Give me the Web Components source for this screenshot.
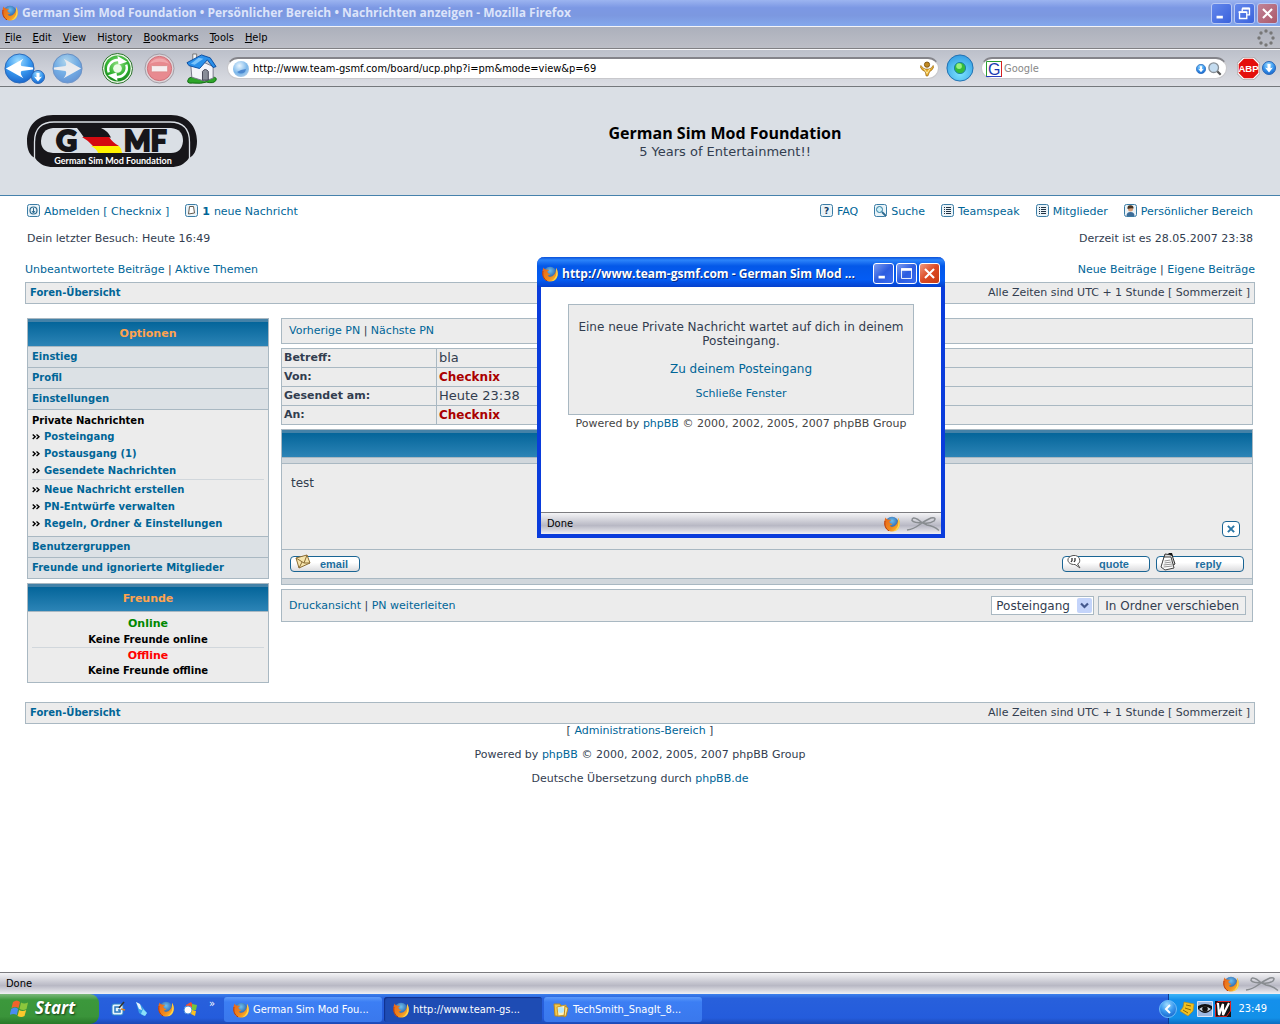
<!DOCTYPE html>
<html lang="de">
<head>
<meta charset="utf-8">
<title>German Sim Mod Foundation • Persönlicher Bereich • Nachrichten anzeigen</title>
<style>
  html, body {
    height: 100%;
    margin: 0;
  }
  body {
    --ui: "DejaVu Sans Condensed", "Liberation Sans", sans-serif;
    --caption: "Open Sans", "Noto Sans", sans-serif;
    --link: #006597;
    --line: #a9b8c2;
    --row: #ececec;
    display: flex;
    flex-direction: column;
    background: #fff;
    color: #323d4f;
    font: 11px/14px "DejaVu Sans", sans-serif;
  }
  .columns {
    display: flex;
    gap: 12px;
    align-items: flex-start;
    padding: 14px 27px 19px;
  }
</style>
</head>
<body>
<browser-window>
  <board-header></board-header>
  <board-nav></board-nav>
  <div class="columns">
    <pm-sidebar></pm-sidebar>
    <pm-view></pm-view>
  </div>
  <crumb-bar style="margin: 0 25px"></crumb-bar>
  <board-footer></board-footer>
</browser-window>
<task-bar></task-bar>
<popup-window></popup-window>

<script>
const shared = `
  :host, *, ::before, ::after { box-sizing: border-box; }
  a { color: var(--link); text-decoration: none; }
  button { font: inherit; color: inherit; border: 0; padding: 0; background: none; }
  ul, p, h1, h2 { margin: 0; padding: 0; list-style: none; }
`;

function define(name, css, html) {
  customElements.define(name, class extends HTMLElement {
    constructor() {
      super();
      this.shadowDOM = this.attachShadow({ mode: 'open' });
    }
    connectedCallback() {
      this.shadowDOM.innerHTML = `<style>${shared}${css}</style>${html}`;
    }
  });
}

const blueBall = `<radialGradient id="b" cx=".45" cy=".25" r=".8"><stop offset="0" stop-color="#9fdcff"/><stop offset=".5" stop-color="#3a9af0"/><stop offset="1" stop-color="#1560c8"/></radialGradient>`;
const smallButton = `<rect x=".5" y=".5" width="12" height="12" rx="2" fill="#eaf3f8" stroke="#3a7ca5"/>`;

// [viewBox, markup]
const icons = {
  firefox: ['0 0 16 16', `
    <radialGradient id="b" cx=".5" cy=".3" r=".7"><stop offset="0" stop-color="#6cc0f0"/><stop offset="1" stop-color="#123a8c"/></radialGradient>
    <linearGradient id="o" x1="0" y1="0" x2="1" y2="1"><stop offset="0" stop-color="#e8641a"/><stop offset=".6" stop-color="#f08a1c"/><stop offset="1" stop-color="#ffd23c"/></linearGradient>
    <circle cx="8" cy="7.5" r="6.8" fill="url(#b)"/>
    <path d="M1.600 1.500C-.2 5-.2 11 3 13.800 6.500 16.600 12 16 14.500 12.300 16.500 9 15.800 4 14 2c.2 3-.6 5-2 6.800-1.700 2.300-5 2.600-6.400.6 1.400.1 2.400-.4 2.600-1.300C6.200 8 5 6.700 5.600 5L7.500 4C5 3.500 2.500 4 1.600 1.500Z" fill="url(#o)"/>
    <path d="M14 2c2 2.500 2.300 7 .5 10-1 1.700-3 3-5 3.300 3-2 5-5 4.800-8.600Z" fill="#ffd84a"/>
    <path d="M1 5c-.8 4 .5 8 4 9.800" stroke="#b8380c" fill="none"/>`],
  back: ['0 0 32 32', `${blueBall}<circle cx="16" cy="16" r="15" fill="url(#b)" stroke="#2a68b8"/><path d="M2 16 20 6q-4 5-2 7.500L30 15v2l-12 1.500q-2 2.500 2 7.500Z" fill="#fff"/>`],
  forward: ['0 0 32 32', `${blueBall}<g opacity=".6"><circle cx="16" cy="16" r="15" fill="url(#b)" stroke="#2a68b8"/><path d="M30 16 12 6q4 5 2 7.500L2 15v2l12 1.500q2 2.500-2 7.500Z" fill="#fff"/></g>`],
  drop: ['0 0 14 14', `${blueBall}<circle cx="7" cy="7" r="6.500" fill="url(#b)" stroke="#2a68b8"/><path d="M7 11.500 3 6.500l2.500.8V3h3v4.300l2.500-.8Z" fill="#fff"/>`],
  reload: ['0 0 32 32', `
    <radialGradient id="g" cx=".5" cy=".35" r=".7"><stop offset="0" stop-color="#8fe080"/><stop offset=".6" stop-color="#30b030"/><stop offset="1" stop-color="#128018"/></radialGradient>
    <circle cx="16" cy="16" r="15.500" fill="#e8f4e4" stroke="#287028"/><circle cx="16" cy="16" r="13.500" fill="url(#g)"/>
    <path d="M7 20a9.500 9.500 0 0 1 11-12.500" stroke="#fff" stroke-width="2.500" fill="none"/><path d="M16 3 26 9l-9 3Z" fill="#fff"/>
    <path d="M25 12a9.500 9.500 0 0 1-11 12.500" stroke="#fff" stroke-width="2.500" fill="none"/><path d="M16 29 6 23l9-3Z" fill="#fff"/>
    <circle cx="16" cy="16" r="4.500" fill="#eafce6"/>`],
  stop: ['0 0 32 32', `<circle cx="16" cy="16" r="15" fill="#ddd4d8" stroke="#a09ca4"/><circle cx="16" cy="16" r="12.500" fill="#e88a90" stroke="#d07078"/><path d="M6 11a12 12 0 0 1 20 0q-10-4-20 0" fill="#f0a8ac"/><rect x="7.500" y="13" width="17" height="6.500" rx="1" fill="#f6eef0" stroke="#d88"/>`],
  home: ['0 0 32 32', `
    <path d="M3 26q-4 6 4 5 9 1 14-1 8 2 10-2 1-3-3-3-12-5-25 1" fill="#2ea62a" stroke="#126a14"/>
    <path d="M5 13 17 9l11 5v12l-9 3-13-4Z" fill="#f4f4fa" stroke="#778"/>
    <path d="M17 28V19q3-4 6 0v9Z" fill="#888c98" stroke="#445"/>
    <path d="M7 8V1h4v5" fill="#f4f4f4" stroke="#777"/>
    <path d="m1 10 15-8 9 3 6 9-3 1-6-8-8 9L3 13Z" fill="#2a90ea" stroke="#0a4ca0"/><path d="m13 5 5 1-9 6-4-1Z" fill="#7cc4fa"/>`],
  globe: ['0 0 18 18', `<radialGradient id="b" cx=".4" cy=".3" r=".8"><stop offset="0" stop-color="#eaf6ff"/><stop offset=".6" stop-color="#7db8ea"/><stop offset="1" stop-color="#b8d0e8"/></radialGradient><circle cx="9" cy="9" r="8" fill="url(#b)"/><path d="M5 12q4 3 8 0l1-3-5 1Z" fill="#4c88d0"/>`],
  figure: ['0 0 16 18', `<circle cx="8" cy="4" r="3" fill="#c08820" stroke="#7c5410"/><path d="M1 5q3 4 5 4h4q3 0 5-4l1 1q-2 5-5 6l-2 5H7l-1-5Q2 11 0 6Z" fill="#eab030" stroke="#8c5c10" stroke-width=".7"/><path d="m5 9 3 5 3-5" stroke="#fff2b0" fill="none"/>`],
  orb: ['0 0 30 30', `<radialGradient id="b" cx=".5" cy=".7" r=".8"><stop offset="0" stop-color="#7ce4ff"/><stop offset="1" stop-color="#2a94e0"/></radialGradient><circle cx="15" cy="15" r="14" fill="url(#b)" stroke="#1a6cae"/><circle cx="15" cy="15" r="6" fill="#34bc3c" stroke="#1a80a0"/><circle cx="14" cy="13" r="3" fill="#96f080"/>`],
  lens: ['0 0 16 16', `<path d="m10 10 4.500 4.500" stroke="#555" stroke-width="2.500"/><circle cx="6.500" cy="6.500" r="5.500" fill="#c4dcf0" stroke="#889098" stroke-width="1.500"/>`],
  google: ['0 0 16 16', `<path fill="#fff" d="M0 0h16v16H0z"/><path d="M.5 16V.5H16" stroke="#2c9c30" fill="none"/><path d="M15.500 0v16" stroke="#d82020"/><path d="M0 15.500h15" stroke="#2840c0"/><text x="2" y="14" font-family="Liberation Sans" font-size="16" fill="#1838b0">G</text>`],
  abp: ['0 0 24 24', `<path d="M7 1h10l6 6v10l-6 6H7l-6-6V7Z" fill="#e4100c" stroke="#fff" stroke-width="1.500"/><path d="M6.500.3h11l6.200 6.200v11l-6.200 6.200h-11L.3 17.500v-11Z" fill="none" stroke="#777" stroke-width=".6"/><text x="12" y="16" text-anchor="middle" font-family="Liberation Sans Narrow, Liberation Sans" font-weight="700" font-size="10" fill="#fff">ABP</text>`],
  throbber: ['0 0 18 18', `<g fill="#777"><circle cx="9" cy="2" r="1.700"/><circle cx="14" cy="4" r="1.700"/><circle cx="16" cy="9" r="1.700"/><circle cx="14" cy="14" r="1.700"/><circle cx="9" cy="16" r="1.700"/><circle cx="4" cy="14" r="1.700"/><circle cx="2" cy="9" r="1.700"/><circle cx="4" cy="4" r="1.700"/></g>`],
  knot: ['0 0 34 16', `<path d="M1 14q7-1 12-5Q20 4 25 2q6-1 3 3-4 3-11 2Q8 7 6 4.500 6 0 12 3.500q4 4 9 5.500 7 1 12 5.500" stroke="#888c90" stroke-width="1.500" fill="none"/>`],
  min: ['0 0 21 21', `<path d="M5 13h7v3H5z" fill="#fff"/>`],
  max: ['0 0 21 21', `<path d="M5 6h11v10H5z" stroke="#fff" fill="none"/><path d="M4.500 4.500h12v3h-12z" fill="#fff"/>`],
  restore: ['0 0 21 21', `<path d="M8 5h8v7h-3M8 5v3M5 9h8v7H5z" stroke="#fff" stroke-width="1.500" fill="none"/><path d="M4 8h9v2H4zM8 4h8v2H8z" fill="#fff"/>`],
  close: ['0 0 21 21', `<path d="m5.500 5.500 10 10m0-10-10 10" stroke="#fff" stroke-width="2.300"/>`],
  logout: ['0 0 13 13', `${smallButton}<circle cx="6.500" cy="6.500" r="3.500" fill="none" stroke="#2c6a90" stroke-width="1.200"/><path d="M6.500 4v5M5 7l1.500 2L8 7" stroke="#2c6a90" fill="none"/>`],
  message: ['0 0 13 13', `${smallButton}<path d="M4.500 2.500h4L9.500 9l-6 1Z" fill="#fff" stroke="#665c50"/>`],
  faq: ['0 0 13 13', `${smallButton}<text x="6.500" y="10" text-anchor="middle" font-family="DejaVu Sans" font-weight="700" font-size="9" fill="#123c64">?</text>`],
  search: ['0 0 13 13', `${smallButton}<circle cx="5.500" cy="5.500" r="3" fill="#d0f0f8" stroke="#2c7aa0"/><path d="m8 8 4 4" stroke="#2c6a90" stroke-width="1.800"/>`],
  list: ['0 0 13 13', `${smallButton}<path d="M3 3.500h1m1 0h5M3 5.500h1m1 0h5M3 7.500h1m1 0h5M3 9.500h1m1 0h5" stroke="#234"/>`],
  user: ['0 0 13 13', `${smallButton}<path d="M2.500 12q0-4 4-4t4 4Z" fill="#3c6c98"/><circle cx="6.500" cy="5" r="2.500" fill="#d89c74"/><path d="M3.500 5q-.5-4 3-3.700t3 3.200Q7 4 3.500 5" fill="#432"/>`],
  arrows: ['0 0 8 7', `<path d="m.7 1.500 2.500 2.200L.7 6m3.800-4.500L7 3.700 4.500 6" stroke="#000" stroke-width="1.400" fill="none"/>`],
  letter: ['0 0 18 16', `<path d="m2 4 11-3 3 8-11 5Z" fill="#f6e4ac" stroke="#8a6c34"/><path d="m2 4 8 5 3-8M8 8l-3 6m5-5 6 0" stroke="#8a6c34" fill="none"/>`],
  bubble: ['0 0 16 16', `<path d="M7 1.500c8-1 8 8 4.500 8.500l2.500 4-5-3.500C1 11-1 3 7 1.500Z" fill="#fff" stroke="#555"/><path d="M6 4v2.500L5 8m4-4v2.500L8 8" stroke="#333" stroke-width="1.300" fill="none"/>`],
  sheets: ['0 0 17 18', `<path d="m5 1 7 1 3 9-8 4-5-3Z" fill="#ddd" stroke="#333"/><path d="m4 4 7 0 3 11-9 2-4-3Z" fill="#fff" stroke="#444"/><path d="m4.500 8 6-1m-6 3 7-1m-8 3 9-1m-9 3 9-1" stroke="#777" stroke-width=".8"/><path d="M8 0h4l1 3-3-1Z" fill="#111"/>`],
  cross: ['0 0 9 9', `<path d="m1 1 7 7M8 1 1 8" stroke="#2a76a6" stroke-width="2.200"/>`],
  windows: ['0 0 20 20', `<path d="M3 4q4-3 7 0L8.500 10q-3-2-7 0Z" fill="#f0622c"/><path d="M11 4.500q3 2 7 0L16.500 11q-3 2-7 0Z" fill="#8cc63c"/><path d="M1.200 11q4-3 7 0L6.700 17q-3-2-7 0Z" fill="#4a8cf0"/><path d="M9.200 12q3 2 7 0L14.500 18q-3 2-7 0Z" fill="#fcc82c"/>`],
  note: ['0 0 16 16', `<rect x="2" y="3" width="11" height="11" rx="2" fill="#e8f4fc" stroke="#2c88c8"/><path d="M10 6H5v5h5V9H8" stroke="#2878c0" stroke-width="1.500" fill="none"/><path d="m9 7 5-6" stroke="#333" stroke-width="1.500"/><path d="m11 8 4 1" stroke="#e08020" stroke-width="1.500"/>`],
  pawn: ['0 0 16 16', `<path d="m2 1 5 3 6 8-3 3-5-3Z" fill="#3aa0e8"/><path d="m2 1 4 2 2 6-3-1Z" fill="#e8f2fc"/><path d="m9 8 4 4-2 3-4-2Z" fill="#8ce0fa"/>`],
  clip: ['0 0 16 16', `<path d="m4 4 5-3 2 3-1 6-6 1Z" fill="#f4502c"/><circle cx="6" cy="9" r="4" fill="#fff" stroke="#4a90e0"/><path d="m10 3 5 1-1 5-4 0Z" fill="#78c438"/><path d="m10 9 4 1-1 5-4-2Z" fill="#fcc020"/>`],
  folder: ['0 0 16 16', `<path d="M1 2h6l1 2h5v10H2Z" fill="#f4c84c" stroke="#b88820"/><path d="m4 5 9-2v10l-8 1Z" fill="#fff4c0" stroke="#c89c30"/><circle cx="8" cy="8" r="3" fill="#b8e8fa"/><path d="m12 4 3 2-2 8-2 1Z" fill="#ffe488" stroke="#b88820"/>`],
  chevron: ['0 0 18 18', `${blueBall}<circle cx="9" cy="9" r="8.500" fill="url(#b)" stroke="#6cbcf8"/><path d="m11 5-4 4 4 4" stroke="#fff" stroke-width="2" fill="none"/>`],
  notes: ['0 0 16 16', `<path d="m5 1 10 2-1 7-5 5-8-5q4-3 4-9" fill="#f0c020" stroke="#b88810" stroke-width=".6"/><path d="m7 4 5 1M6 7l6 2M4 9l5 3" stroke="#8c6808"/>`],
  eye: ['0 0 16 16', `<path fill="#9cb8e0" stroke="#d8e4f8" d="M.5.500h15v15H.5z"/><path d="M1 5q7-4 14 0v3q-7 8-14 0Z" fill="#111"/><path d="M2 8q6-5 12 0-6 5-12 0" fill="#ccd4dc"/><circle cx="8" cy="8" r="2.800" fill="#111"/>`],
  w: ['0 0 16 16', `<path fill="#111" d="M0 0h16v16H0z"/><path d="M.5 16V4L3 .5h12.500V10l-4 5.500Z" stroke="#e02020" fill="none"/><path d="M3 2 4 14 8 3v11l6-12" stroke="#fff" stroke-width="2.200" fill="none"/>`],
  logo: ['0 0 170 52', `
    <path d="M26 0H144C161 0 170 12 170 26 170 35 167 41 162 43 157 50 151 52 144 52H26C19 52 13 50 8 43 3 41 0 35 0 26 0 12 9 0 26 0Z" fill="#17161a"/>
    <path d="M7.500 44V27C7.500 13 15 7 27 7H143C155 7 162.500 13 162.500 27V44" stroke="#dadfe5" stroke-width="1.300" fill="none"/>
    <path d="M26 13H144Q156 14 156 26 155 38 144 38H26Q14 37 14 26 15 14 26 13Z" fill="#dadfe5"/>
    <path d="M50 13H74Q81 16 84 22.500H57Q54 18 50 13Z" fill="#17161a"/>
    <path d="M55 22H82Q86 28 92 31H66Q62 26 55 22Z" fill="#d40a10"/>
    <path d="M64 31H92Q95 34 95 38H71Q70 34 64 31Z" fill="#fff200"/>
    <g fill="#17161a" stroke="#17161a" stroke-width="2" font-family="Lato, Open Sans" font-weight="900">
      <text x="29" y="36" font-size="29">G</text>
      <text x="97" y="36" font-size="28">MF</text>
    </g>
    <text x="86" y="49" text-anchor="middle" font-family="Lato" font-weight="700" font-size="9" fill="#fff">German Sim Mod Foundation</text>`],
};

class SvgIcon extends HTMLElement {
  constructor() {
    super();
    this.shadowDOM = this.attachShadow({ mode: 'open' });
  }
  connectedCallback() {
    const [box, markup] = icons[this.getAttribute('name')];
    const [, , w, h] = box.split(' ');
    const width = this.getAttribute('size') || w;
    const height = Math.round(width * h / w);
    this.shadowDOM.innerHTML = `
      <style>
        :host { display: inline-block; flex: none; width: ${width}px; height: ${height}px; }
        svg { display: block; }
      </style>
      <svg width="${width}" height="${height}" viewBox="${box}" aria-hidden="true">${markup}</svg>`;
  }
}
customElements.define('svg-icon', SvgIcon);

/* ---- window chrome ---- */

define('caption-buttons', `
  :host { display: flex; gap: 2px; }
  button {
    display: flex;
    border: 1px solid #fff;
    border-radius: 3px;
    background: linear-gradient(135deg, #7c9cf0, #2c5ce0 50%, #3a6cf0);
  }
  button:last-child { background: linear-gradient(135deg, #f09a80, #dc4a24 50%, #c83c14); }
  :host([inactive]) button { border-color: #b8c8f4; background: linear-gradient(135deg, #6488ec, #3a62dc); }
  :host([inactive]) button:last-child { background: linear-gradient(135deg, #c08498, #ac5868); }
  :host([inactive]) .max, .restore { display: none; }
  :host([inactive]) .restore { display: block; }
`, `
  <button aria-label="Minimize"><svg-icon name="min" size="19"></svg-icon></button>
  <button aria-label="Maximize"><svg-icon class="max" name="max" size="19"></svg-icon><svg-icon class="restore" name="restore" size="19"></svg-icon></button>
  <button aria-label="Close"><svg-icon name="close" size="19"></svg-icon></button>
`);

define('status-bar', `
  :host {
    display: flex;
    align-items: center;
    gap: 6px;
    height: 22px;
    flex: none;
    padding: 0 1px 0 6px;
    border-top: 1px solid #7c7c80;
    background: linear-gradient(#f4f4f6, #b8b8c4 60%, #f0f0f4);
    color: #000;
    font: 11px/14px var(--ui);
  }
  span { flex: 1; }
`, `
  <span>Done</span>
  <svg-icon name="firefox"></svg-icon>
  <svg-icon name="knot"></svg-icon>
`);

define('menu-bar', `
  :host {
    display: flex;
    align-items: center;
    justify-content: space-between;
    height: 23px;
    padding: 0 5px;
    border-top: 1px solid #f4f4f8;
    border-bottom: 1px solid #808084;
    background: linear-gradient(#acb0bc, #bcbec6);
    color: #000;
    font: 11px/14px var(--ui);
  }
  nav { display: flex; gap: 11px; }
`, `
  <nav>
    <button><u>F</u>ile</button><button><u>E</u>dit</button><button><u>V</u>iew</button><button>Hi<u>s</u>tory</button><button><u>B</u>ookmarks</button><button><u>T</u>ools</button><button><u>H</u>elp</button>
  </nav>
  <svg-icon name="throbber"></svg-icon>
`);

define('nav-toolbar', `
  :host {
    display: flex;
    align-items: center;
    gap: 7px;
    height: 38px;
    padding: 0 4px;
    border-top: 1px solid #f8f8fa;
    border-bottom: 1px solid #74787c;
    background: linear-gradient(#bcc0ca, #dcdee4);
    color: #000;
    font: 11px/14px var(--ui);
  }
  button { display: flex; align-items: flex-end; }
  .group { display: flex; gap: 7px; }
  .drop { margin-left: -4px; }
  .page { gap: 11px; margin: 0 3px 0 12px; }
  .field {
    display: flex;
    align-items: center;
    gap: 3px;
    height: 22px;
    padding: 0 4px;
    border: 1px solid #c8c8cc;
    border-top: 2px solid #84848a;
    border-radius: 11px;
    background: #fff;
  }
  .url { flex: 1; }
  .find { width: 246px; gap: 2px; }
  .abp { align-items: center; gap: 2px; margin-left: 3px; }
  input { flex: 1; min-width: 0; border: 0; padding: 0; background: none; color: #000; font: inherit; outline: 0; }
  input::placeholder { color: #888; opacity: 1; }
`, `
  <div class="group">
    <button aria-label="Back"><svg-icon name="back" size="31"></svg-icon><svg-icon class="drop" name="drop"></svg-icon></button>
    <button aria-label="Forward"><svg-icon name="forward" size="31"></svg-icon></button>
  </div>
  <div class="group page">
    <button aria-label="Reload"><svg-icon name="reload" size="31"></svg-icon></button>
    <button aria-label="Stop"><svg-icon name="stop" size="31"></svg-icon></button>
    <button aria-label="Home"><svg-icon name="home" size="31"></svg-icon></button>
  </div>
  <div class="field url">
    <svg-icon name="globe"></svg-icon>
    <input aria-label="Location" value="http://www.team-gsmf.com/board/ucp.php?i=pm&amp;mode=view&amp;p=69">
    <svg-icon name="figure" size="14"></svg-icon>
  </div>
  <button aria-label="Go"><svg-icon name="orb" size="28"></svg-icon></button>
  <div class="field find">
    <svg-icon name="google"></svg-icon>
    <input aria-label="Search" placeholder="Google">
    <svg-icon name="drop" size="10"></svg-icon>
    <svg-icon name="lens" size="14"></svg-icon>
  </div>
  <button class="abp" aria-label="Adblock Plus"><svg-icon name="abp" size="23"></svg-icon><svg-icon name="drop"></svg-icon></button>
`);

define('browser-window', `
  :host { display: flex; flex-direction: column; flex: 1; min-height: 0; }
  header {
    display: flex;
    align-items: center;
    gap: 4px;
    height: 26px;
    padding: 0 2px;
    background: linear-gradient(#9cb4f0, #7c98e4 30%, #7c98e0 60%, #84a8ec);
  }
  h1 { flex: 1; color: #dce4fa; font: 700 12px/16px var(--caption); }
  main { flex: 1; min-height: 0; overflow: hidden; background: #fff; }
`, `
  <header>
    <svg-icon name="firefox"></svg-icon>
    <h1>German Sim Mod Foundation • Persönlicher Bereich • Nachrichten anzeigen - Mozilla Firefox</h1>
    <caption-buttons inactive></caption-buttons>
  </header>
  <menu-bar></menu-bar>
  <nav-toolbar></nav-toolbar>
  <main><slot></slot></main>
  <status-bar></status-bar>
`);

/* ---- board page ---- */

define('board-header', `
  :host {
    display: flex;
    align-items: center;
    height: 109px;
    padding: 0 27px;
    border-bottom: 1px solid #4682ac;
    background: #dadfe5;
  }
  a { display: flex; }
  div { flex: 1; text-align: center; font-size: 13px; line-height: 16px; }
  h1 { color: #000; font: 700 16px/22px var(--caption); }
`, `
  <a href="#" aria-label="GSMF"><svg-icon name="logo"></svg-icon></a>
  <div>
    <h1>German Sim Mod Foundation</h1>
    <p>5 Years of Entertainment!!</p>
  </div>
`);

define('crumb-bar', `
  :host {
    display: flex;
    justify-content: space-between;
    align-items: center;
    height: 22px;
    padding: 0 4px;
    border: 1px solid var(--line);
    background: var(--row);
  }
  a { font-size: 10px; font-weight: 700; }
`, `
  <a href="#">Foren-Übersicht</a>
  <span>Alle Zeiten sind UTC + 1 Stunde [ Sommerzeit ]</span>
`);

define('board-nav', `
  :host { display: block; padding: 7px 25px 0; }
  div { display: flex; justify-content: space-between; }
  .links, .visit { padding: 0 2px; }
  .links span { display: flex; gap: 16px; }
  .links a { display: flex; align-items: center; gap: 4px; line-height: 18px; }
  .links svg-icon { margin-bottom: 4px; }
  .visit { padding-top: 11px; }
  .topics { padding: 17px 0 5px; }
`, `
  <div class="links">
    <span>
      <a href="#"><svg-icon name="logout"></svg-icon>Abmelden [ Checknix ]</a>
      <a href="#"><svg-icon name="message"></svg-icon><b>1</b> neue Nachricht</a>
    </span>
    <span>
      <a href="#"><svg-icon name="faq"></svg-icon>FAQ</a>
      <a href="#"><svg-icon name="search"></svg-icon>Suche</a>
      <a href="#"><svg-icon name="list"></svg-icon>Teamspeak</a>
      <a href="#"><svg-icon name="list"></svg-icon>Mitglieder</a>
      <a href="#"><svg-icon name="user"></svg-icon>Persönlicher Bereich</a>
    </span>
  </div>
  <div class="visit">
    <p>Dein letzter Besuch: Heute 16:49</p>
    <p>Derzeit ist es 28.05.2007 23:38</p>
  </div>
  <div class="topics">
    <p><a href="#">Unbeantwortete Beiträge</a> | <a href="#">Aktive Themen</a></p>
    <p><a href="#">Neue Beiträge</a> | <a href="#">Eigene Beiträge</a></p>
  </div>
  <crumb-bar></crumb-bar>
`);

// Titled box; the coloured bar is there even when no title is passed in
define('board-panel', `
  :host { display: block; border: 1px solid var(--line); background: var(--row); }
  h2 {
    height: 27px;
    border-top: 3px solid #4482a8;
    background: linear-gradient(#04659a, #2c84b6);
    color: #ffa34f;
    font-size: 11px;
    line-height: 24px;
    text-align: center;
  }
`, `<h2><slot name="title"></slot></h2><slot></slot>`);

define('pm-sidebar', `
  :host { display: flex; flex-direction: column; gap: 4px; width: 242px; flex: none; font-size: 10px; font-weight: 700; color: #000; }
  .tab { padding: 3px 4px; border-top: 1px solid var(--line); background: #dce1e5; }
  .open { padding: 3px 4px 4px; border-top: 1px solid var(--line); }
  .open li { display: flex; align-items: center; gap: 4px; line-height: 17px; }
  .open p { line-height: 15px; }
  .open ul + ul { padding-top: 1px; border-top: 1px solid #d1d7dc; }
  .friends { padding: 4px; border-top: 1px solid var(--line); text-align: center; }
  .friends p { line-height: 16px; }
  .friends p + p { line-height: 15px; }
  .friends p:nth-child(3) { border-top: 1px solid #d1d7dc; }
  .on, .off { font-size: 11px; color: #008800; }
  .off { color: #f00; }
`, `
  <board-panel>
    <span slot="title">Optionen</span>
    <nav>
      <div class="tab"><a href="#">Einstieg</a></div>
      <div class="tab"><a href="#">Profil</a></div>
      <div class="tab"><a href="#">Einstellungen</a></div>
      <div class="open">
        <p>Private Nachrichten</p>
        <ul>
          <li><svg-icon name="arrows"></svg-icon><a href="#">Posteingang</a></li>
          <li><svg-icon name="arrows"></svg-icon><a href="#">Postausgang (1)</a></li>
          <li><svg-icon name="arrows"></svg-icon><a href="#">Gesendete Nachrichten</a></li>
        </ul>
        <ul>
          <li><svg-icon name="arrows"></svg-icon><a href="#">Neue Nachricht erstellen</a></li>
          <li><svg-icon name="arrows"></svg-icon><a href="#">PN-Entwürfe verwalten</a></li>
          <li><svg-icon name="arrows"></svg-icon><a href="#">Regeln, Ordner &amp; Einstellungen</a></li>
        </ul>
      </div>
      <div class="tab"><a href="#">Benutzergruppen</a></div>
      <div class="tab"><a href="#">Freunde und ignorierte Mitglieder</a></div>
    </nav>
  </board-panel>
  <board-panel>
    <span slot="title">Freunde</span>
    <div class="friends">
      <p class="on">Online</p>
      <p>Keine Freunde online</p>
      <p class="off">Offline</p>
      <p>Keine Freunde offline</p>
    </div>
  </board-panel>
`);

define('image-button', `
  :host { display: block; }
  a {
    display: flex;
    align-items: center;
    height: 16px;
    padding: 0 3px;
    border: 1px solid #1a6594;
    border-radius: 4px;
    background: linear-gradient(#fff 40%, #dcdcde);
    color: #1f6f9f;
    font: 700 11px/14px "Liberation Sans", sans-serif;
  }
  span { flex: 1; text-align: center; }
  ::slotted(svg-icon) { margin-top: -5px; }
`, `<a href="#"><slot name="icon"></slot><span><slot></slot></span></a>`);

define('pm-view', `
  :host { display: flex; flex-direction: column; gap: 4px; flex: 1; min-width: 0; }
  .bar {
    display: flex;
    align-items: center;
    justify-content: space-between;
    padding: 0 6px 0 7px;
    height: 26px;
    border: 1px solid var(--line);
    background: var(--row);
  }
  .bar.low { height: 33px; }
  table { width: 100%; border-collapse: collapse; background: var(--row); }
  th, td { height: 19px; padding: 0 2px; border: 1px solid var(--line); text-align: left; font-size: 13px; line-height: 16px; }
  th { width: 155px; font-size: 11px; }
  td a { color: #a00; font-size: 12px; font-weight: 700; }
  .spacer { height: 6px; border-top: 1px solid var(--line); background: #d1d7dc; }
  .post { display: flex; flex-direction: column; justify-content: space-between; height: 86px; padding: 12px 12px 12px 9px; border-top: 1px solid var(--line); font-size: 12px; }
  .delete { align-self: flex-end; display: flex; padding: 3px 4px; border: 1px solid #1a6594; border-radius: 4px; background: #fff; }
  .actions { display: flex; align-items: center; gap: 6px; height: 29px; padding: 0 8px; border-top: 1px solid var(--line); }
  .actions > * { width: 88px; }
  .actions > :first-child { width: 70px; margin-right: auto; }
  form { display: flex; gap: 4px; }
  .pick { display: grid; align-items: center; }
  .pick > * { grid-area: 1 / 1; }
  select, .move { height: 19px; border: 1px solid var(--line); color: #323d4f; font: 12px/14px "DejaVu Sans", sans-serif; }
  select { appearance: none; width: 103px; padding: 0 20px 0 4px; border-radius: 0; background: #fff; }
  .move { padding: 0 6px; background: #efefef; }
  .pick svg { justify-self: end; margin-right: 2px; border-radius: 2px; background: #c4d4fa; pointer-events: none; }
`, `
  <div class="bar"><span><a href="#">Vorherige PN</a> | <a href="#">Nächste PN</a></span></div>
  <table>
    <tr><th scope="row">Betreff:</th><td>bla</td></tr>
    <tr><th scope="row">Von:</th><td><a href="#">Checknix</a></td></tr>
    <tr><th scope="row">Gesendet am:</th><td>Heute 23:38</td></tr>
    <tr><th scope="row">An:</th><td><a href="#">Checknix</a></td></tr>
  </table>
  <board-panel>
    <div class="spacer"></div>
    <div class="post">
      <p>test</p>
      <a class="delete" href="#" aria-label="Löschen"><svg-icon name="cross" size="8"></svg-icon></a>
    </div>
    <div class="actions">
      <image-button><svg-icon slot="icon" name="letter"></svg-icon>email</image-button>
      <image-button><svg-icon slot="icon" name="bubble"></svg-icon>quote</image-button>
      <image-button><svg-icon slot="icon" name="sheets"></svg-icon>reply</image-button>
    </div>
    <div class="spacer"></div>
  </board-panel>
  <div class="bar low">
    <span><a href="#">Druckansicht</a> | <a href="#">PN weiterleiten</a></span>
    <form>
      <span class="pick">
        <select aria-label="Ordner"><option>Posteingang</option></select>
        <svg width="15" height="15" viewBox="0 0 15 15"><path d="m4 5.500 3.500 3.500L11 5.500" stroke="#44588c" stroke-width="2.200" fill="none"/></svg>
      </span>
      <button class="move" type="button">In Ordner verschieben</button>
    </form>
  </div>
`);

define('board-footer', `
  :host { display: block; text-align: center; }
  p + p { margin-top: 10px; }
`, `
  <p>[ <a href="#">Administrations-Bereich</a> ]</p>
  <p>Powered by <a href="#">phpBB</a> © 2000, 2002, 2005, 2007 phpBB Group</p>
  <p>Deutsche Übersetzung durch <a href="#">phpBB.de</a></p>
`);

/* ---- popup ---- */

define('popup-window', `
  :host {
    position: absolute;
    left: 537px;
    top: 257px;
    display: flex;
    flex-direction: column;
    width: 408px;
    height: 281px;
    border: 4px solid #0a3cdc;
    border-top: 0;
    border-radius: 7px 7px 0 0;
    background: #fff;
  }
  header {
    display: flex;
    align-items: center;
    gap: 4px;
    height: 30px;
    margin: 0 -4px;
    padding: 3px 5px 0;
    border-radius: 7px 7px 0 0;
    background: linear-gradient(#0a50d8, #2c84fa 10%, #0458e8 30%, #045cf4 75%, #0640cc);
  }
  h1 { flex: 1; min-width: 0; color: #fff; font: 700 12px/18px var(--caption); text-shadow: 1px 1px #0a2c80; white-space: nowrap; }
  main { flex: 1; padding: 17px 27px; text-align: center; }
  .note { padding: 15px 0 13px; border: 1px solid var(--line); background: var(--row); font-size: 12px; }
  .note p + p { margin-top: 14px; }
  .note p.close { margin-top: 11px; font-size: 11px; }
  small { font-size: 11px; line-height: 18px; color: #444; }
`, `
  <header>
    <svg-icon name="firefox"></svg-icon>
    <h1>http://www.team-gsmf.com - German Sim Mod ...</h1>
    <caption-buttons></caption-buttons>
  </header>
  <main>
    <div class="note">
      <p>Eine neue Private Nachricht wartet auf dich in deinem Posteingang.</p>
      <p><a href="#">Zu deinem Posteingang</a></p>
      <p class="close"><a href="#">Schließe Fenster</a></p>
    </div>
    <small>Powered by <a href="#">phpBB</a> © 2000, 2002, 2005, 2007 phpBB Group</small>
  </main>
  <status-bar></status-bar>
`);

/* ---- desktop task bar ---- */

define('task-button', `
  :host { display: block; width: 158px; }
  button {
    display: flex;
    align-items: center;
    gap: 4px;
    width: 100%;
    height: 25px;
    padding: 0 9px;
    border-radius: 3px;
    background: linear-gradient(#5c9afa, #3c7ef4 20%, #3a78ec);
    white-space: nowrap;
  }
  :host([active]) button { background: #1e4cb4; box-shadow: inset 1px 1px 1px #10308c; }
`, `<button><slot></slot></button>`);

define('task-bar', `
  :host {
    display: flex;
    align-items: stretch;
    height: 30px;
    flex: none;
    background: linear-gradient(#3c80ec, #2860dc 15%, #245cdc 80%, #1c48b4);
    color: #fff;
    font: 11px/14px var(--ui);
  }
  .start {
    display: flex;
    align-items: center;
    gap: 5px;
    width: 99px;
    padding: 0 0 2px 10px;
    border-radius: 0 9px 9px 0;
    background: linear-gradient(#7cb87c, #3c983c 20%, #3a943a 75%, #287828);
    font: italic 700 17px/20px var(--caption);
    text-shadow: 1px 1px 2px #143c14;
  }
  .quick { display: flex; align-items: center; gap: 8px; padding: 0 9px 0 11px; }
  .tasks { display: flex; align-items: flex-end; gap: 2px; flex: 1; padding-bottom: 2px; }
  .more { align-self: flex-start; margin-top: 3px; padding-left: 3px; }
  .tray {
    display: flex;
    align-items: center;
    gap: 2px;
    padding-right: 13px;
    border-left: 1px solid #0c3c94;
    background: linear-gradient(#3cb4f8, #1490ec 20%, #1290e8 80%, #0c6cc0);
  }
  .tray svg-icon:first-child { margin-left: -10px; }
  time { margin-left: 5px; }
`, `
  <button class="start"><svg-icon name="windows"></svg-icon>Start</button>
  <div class="quick">
    <svg-icon name="note"></svg-icon>
    <svg-icon name="pawn"></svg-icon>
    <svg-icon name="firefox"></svg-icon>
    <svg-icon name="clip"></svg-icon>
    <span class="more">»</span>
  </div>
  <div class="tasks">
    <task-button><svg-icon name="firefox"></svg-icon>German Sim Mod Fou...</task-button>
    <task-button active><svg-icon name="firefox"></svg-icon>http://www.team-gs...</task-button>
    <task-button><svg-icon name="folder"></svg-icon>TechSmith_SnagIt_8...</task-button>
  </div>
  <div class="tray">
    <svg-icon name="chevron"></svg-icon>
    <svg-icon name="notes"></svg-icon>
    <svg-icon name="eye"></svg-icon>
    <svg-icon name="w"></svg-icon>
    <time>23:49</time>
  </div>
`);
</script>
</body>
</html>
